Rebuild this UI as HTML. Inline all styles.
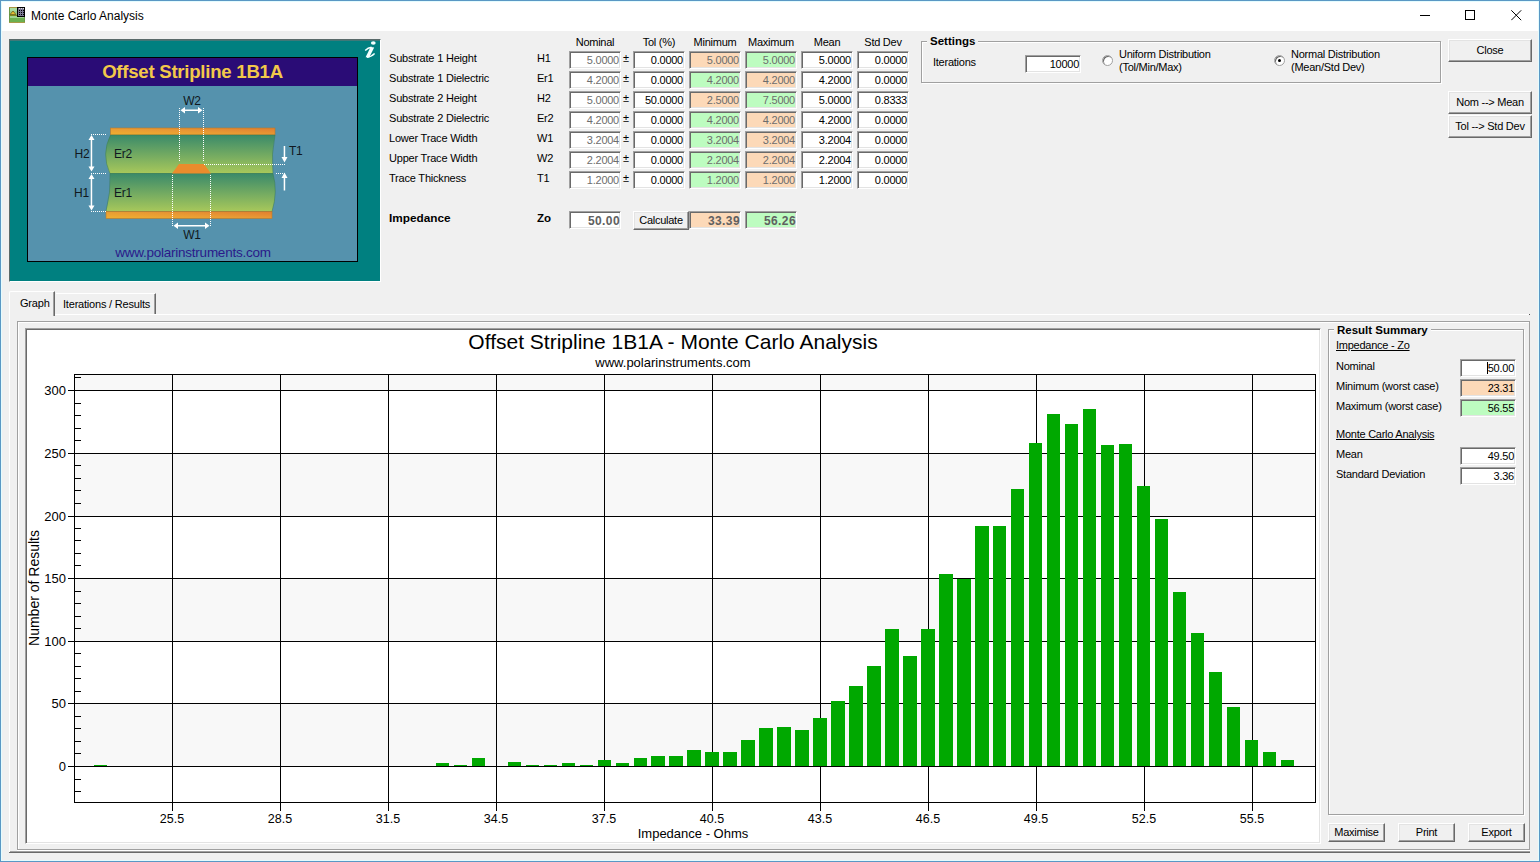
<!DOCTYPE html><html><head><meta charset="utf-8"><title>Monte Carlo Analysis</title><style>
*{margin:0;padding:0}
html,body{width:1540px;height:862px;overflow:hidden;background:#f0f0f0;font-family:"Liberation Sans",sans-serif;font-size:11px;color:#000;letter-spacing:-0.25px}
.nl{letter-spacing:0}
.ab{position:absolute;white-space:nowrap}
.sk{position:absolute;box-sizing:border-box;background:#fff;border-top:1px solid #a0a0a0;border-left:1px solid #a0a0a0;border-right:1px solid #fff;border-bottom:1px solid #fff;box-shadow:inset 1px 1px 0 #696969,inset -1px -1px 0 #e3e3e3;text-align:right;padding-right:1px;line-height:16px;font-size:11px;white-space:nowrap}
.bt{position:absolute;box-sizing:border-box;background:#f0f0f0;border-top:1px solid #fff;border-left:1px solid #fff;border-right:1px solid #696969;border-bottom:1px solid #696969;box-shadow:inset -1px -1px 0 #a0a0a0,inset 1px 1px 0 #e3e3e3;text-align:center;font-size:11px;white-space:nowrap}
.gb{position:absolute;box-sizing:border-box;border:1px solid #a0a0a0;box-shadow:inset 1px 1px 0 #fff,1px 1px 0 #fff}
.gy{color:#6d6d6d}
.pk{background:#fcd9b8}
.gn{background:#bdfcc0}
.b{font-weight:bold;letter-spacing:0}
</style></head><body>
<div class="ab" style="left:0;top:0;width:1540px;height:31px;background:#fff"></div>
<div class="ab" style="left:0;top:0;width:1538px;height:860px;border:1px solid #5a98c4;box-shadow:inset 1px 1px 0 #e4fcff,inset -1px -1px 0 #e4fcff"></div>
<svg class="ab" style="left:9px;top:7px" width="16" height="16" viewBox="0 0 16 16" shape-rendering="crispEdges">
<rect x="0" y="0" width="16" height="16" fill="#6a9a48"/>
<rect x="0" y="0" width="8" height="1" fill="#a89440"/>
<rect x="0" y="15" width="16" height="1" fill="#a89a48"/>
<rect x="1" y="1" width="7" height="3" fill="#a8dca0"/>
<rect x="1" y="4" width="7" height="4" fill="#98cc88"/>
<path d="M1 7.5 L4 4 L7 7.5 Z" fill="#e8c030" stroke="#706018" stroke-width="0.8" shape-rendering="auto"/>
<rect x="1" y="8" width="7" height="1" fill="#7a8a20"/>
<rect x="1" y="9" width="14" height="2" fill="#a0d490"/>
<rect x="1" y="11" width="14" height="4" fill="#6cb050"/>
<rect x="8" y="0" width="8" height="10" fill="#000"/>
<rect x="9" y="1" width="6" height="8" fill="#7c7a94"/>
<g fill="#000"><rect x="10" y="3" width="1" height="1"/><rect x="12" y="3" width="1" height="1"/><rect x="14" y="3" width="1" height="1"/>
<rect x="10" y="5" width="1" height="1"/><rect x="12" y="5" width="1" height="1"/><rect x="14" y="5" width="1" height="1"/>
<rect x="10" y="7" width="1" height="1"/><rect x="12" y="7" width="1" height="1"/><rect x="14" y="7" width="1" height="1"/></g>
<g fill="#ddd"><rect x="10" y="1" width="1" height="1"/><rect x="12" y="1" width="1" height="1"/><rect x="14" y="1" width="1" height="1"/></g>
</svg>
<div class="ab" style="left:31px;top:8px;font-size:12px;letter-spacing:0;line-height:16px">Monte Carlo Analysis</div>
<div class="ab" style="left:1420px;top:15px;width:10px;height:1px;background:#000"></div>
<div class="ab" style="left:1465px;top:10px;width:10px;height:10px;box-sizing:border-box;border:1px solid #000"></div>
<svg class="ab" style="left:1511px;top:10px" width="11" height="11" viewBox="0 0 11 11"><path d="M0.3 0.3L10.2 10.2M10.2 0.3L0.3 10.2" stroke="#000" stroke-width="1"/></svg>
<div class="ab" style="left:9px;top:39px;width:372px;height:243px;box-sizing:border-box;background:#008080;border-top:1px solid #5a6a6a;border-left:1px solid #5a6a6a;border-right:1px solid #fff;border-bottom:1px solid #fff;box-shadow:inset 0 1px 0 #3f7878"></div>
<svg class="ab" style="left:360px;top:38px" width="20" height="22" viewBox="360 38 20 22">
<ellipse cx="373.3" cy="43" rx="2.4" ry="1.8" fill="#f4ffff"/>
<path d="M370.6 47 L374.2 47.4 L369.2 57.6 L365.6 57.2 Z" fill="#f4ffff"/>
<path d="M365.2 50.6 Q368 47.6 371.5 47.3" stroke="#f4ffff" stroke-width="1.4" fill="none"/>
<path d="M367 57.3 Q371 57.2 374.6 53.6" stroke="#f4ffff" stroke-width="1.4" fill="none"/>
</svg>
<svg class="ab" style="left:27px;top:57px" width="331" height="205" viewBox="27 57 331 205">
<defs>
<linearGradient id="dg" x1="0" y1="0" x2="0" y2="1"><stop offset="0" stop-color="#3a8a6a"/><stop offset="1" stop-color="#a8c85a"/></linearGradient>
<linearGradient id="cu" x1="0" y1="0" x2="1" y2="0"><stop offset="0" stop-color="#f0a838"/><stop offset="0.5" stop-color="#eca035"/><stop offset="1" stop-color="#e08a30"/></linearGradient>
<linearGradient id="cu2" x1="0" y1="1" x2="1" y2="0"><stop offset="0" stop-color="#f0b030"/><stop offset="0.5" stop-color="#e89a34"/><stop offset="1" stop-color="#e07e30"/></linearGradient>
</defs>
<rect x="27.5" y="57.5" width="330" height="204" fill="#5592ad" stroke="#000" stroke-width="1"/>
<rect x="28" y="58" width="329" height="28" fill="#2a0c76"/>
<text x="192.5" y="78" text-anchor="middle" font-family="Liberation Sans" font-weight="bold" font-size="18.6" fill="#f2c84a">Offset Stripline 1B1A</text>
<rect x="110.5" y="128" width="164.5" height="7" fill="url(#cu2)" stroke="#b8782a" stroke-width="0.6"/>
<path d="M110.5 135 L275 135 Q271 154 273 173.5 L110 173.5 Q101 154 110.5 135 Z" fill="url(#dg)" stroke="#3a7a50" stroke-width="0.5"/>
<path d="M110 173.5 L273 173.5 Q278 192 272 211.5 L106 211.5 Q111 192 110 173.5 Z" fill="url(#dg)" stroke="#3a7a50" stroke-width="0.5"/>
<rect x="106" y="211.5" width="166" height="7" fill="url(#cu2)" stroke="#b8782a" stroke-width="0.6"/>
<path d="M172 173.5 L179 164 L204 164 L211 173.5 Z" fill="#ea8c2c"/>
<g stroke="#fff" stroke-width="1" stroke-dasharray="1 1" fill="none">
<path d="M179.5 108 V162 M203.5 108 V162"/>
<path d="M172.5 175 V226 M210.5 175 V226"/>
<path d="M91 134.5 H106 M91 173.5 H106 M91 211.5 H106"/>
<path d="M204 164.5 H285 M276 173.5 H285"/>
</g>
<g fill="#fff" stroke="none">
<rect x="183" y="109.5" width="17" height="1.5"/><path d="M180.5 110.2 L185 107 L185 113.5 Z M202.5 110.2 L198 107 L198 113.5 Z"/>
<rect x="176" y="225" width="31" height="1.5"/><path d="M173.5 225.7 L178 222.5 L178 229 Z M209.5 225.7 L205 222.5 L205 229 Z"/>
<rect x="90.7" y="137" width="1.5" height="32"/><path d="M91.5 135 L88.5 140 L94.5 140 Z M91.5 171.5 L88.5 166.5 L94.5 166.5 Z"/>
<rect x="90.7" y="176" width="1.5" height="32"/><path d="M91.5 174 L88.5 179 L94.5 179 Z M91.5 210.5 L88.5 205.5 L94.5 205.5 Z"/>
<rect x="283.7" y="146" width="1.5" height="12"/><path d="M284.5 162.5 L281.5 157 L287.5 157 Z"/>
<rect x="283.7" y="177" width="1.5" height="13.5"/><path d="M284.5 172.5 L281.5 178 L287.5 178 Z"/>
</g>
<g font-family="Liberation Sans" font-size="12" fill="#101820">
<text x="192" y="105" text-anchor="middle">W2</text>
<text x="192" y="239" text-anchor="middle">W1</text>
<text x="82" y="158" text-anchor="middle">H2</text>
<text x="81.5" y="196.5" text-anchor="middle">H1</text>
<text x="114" y="158">Er2</text>
<text x="114" y="196.5">Er1</text>
<text x="289" y="155">T1</text>
</g>
<text x="193" y="257" text-anchor="middle" font-family="Liberation Sans" font-size="13.5" fill="#2a1a8a">www.polarinstruments.com</text>
</svg>
<div class="ab" style="left:569px;top:35px;width:52px;text-align:center;line-height:14px">Nominal</div>
<div class="ab" style="left:633px;top:35px;width:52px;text-align:center;line-height:14px">Tol (%)</div>
<div class="ab" style="left:689px;top:35px;width:52px;text-align:center;line-height:14px">Minimum</div>
<div class="ab" style="left:745px;top:35px;width:52px;text-align:center;line-height:14px">Maximum</div>
<div class="ab" style="left:801px;top:35px;width:52px;text-align:center;line-height:14px">Mean</div>
<div class="ab" style="left:857px;top:35px;width:52px;text-align:center;line-height:14px">Std Dev</div>
<div class="ab" style="left:389px;top:51px;line-height:14px;letter-spacing:-0.2px">Substrate 1 Height</div>
<div class="ab" style="left:537px;top:51px;line-height:14px">H1</div>
<div class="sk gy" style="left:569px;top:51px;width:52px;height:18px">5.0000</div>
<div class="ab" style="left:623px;top:51px;line-height:14px;font-size:11px">&#177;</div>
<div class="sk" style="left:633px;top:51px;width:52px;height:18px">0.0000</div>
<div class="sk gy pk" style="left:689px;top:51px;width:52px;height:18px">5.0000</div>
<div class="sk gy gn" style="left:745px;top:51px;width:52px;height:18px">5.0000</div>
<div class="sk" style="left:801px;top:51px;width:52px;height:18px">5.0000</div>
<div class="sk" style="left:857px;top:51px;width:52px;height:18px">0.0000</div>
<div class="ab" style="left:389px;top:71px;line-height:14px;letter-spacing:-0.2px">Substrate 1 Dielectric</div>
<div class="ab" style="left:537px;top:71px;line-height:14px">Er1</div>
<div class="sk gy" style="left:569px;top:71px;width:52px;height:18px">4.2000</div>
<div class="ab" style="left:623px;top:71px;line-height:14px;font-size:11px">&#177;</div>
<div class="sk" style="left:633px;top:71px;width:52px;height:18px">0.0000</div>
<div class="sk gy gn" style="left:689px;top:71px;width:52px;height:18px">4.2000</div>
<div class="sk gy pk" style="left:745px;top:71px;width:52px;height:18px">4.2000</div>
<div class="sk" style="left:801px;top:71px;width:52px;height:18px">4.2000</div>
<div class="sk" style="left:857px;top:71px;width:52px;height:18px">0.0000</div>
<div class="ab" style="left:389px;top:91px;line-height:14px;letter-spacing:-0.2px">Substrate 2 Height</div>
<div class="ab" style="left:537px;top:91px;line-height:14px">H2</div>
<div class="sk gy" style="left:569px;top:91px;width:52px;height:18px">5.0000</div>
<div class="ab" style="left:623px;top:91px;line-height:14px;font-size:11px">&#177;</div>
<div class="sk" style="left:633px;top:91px;width:52px;height:18px">50.0000</div>
<div class="sk gy pk" style="left:689px;top:91px;width:52px;height:18px">2.5000</div>
<div class="sk gy gn" style="left:745px;top:91px;width:52px;height:18px">7.5000</div>
<div class="sk" style="left:801px;top:91px;width:52px;height:18px">5.0000</div>
<div class="sk" style="left:857px;top:91px;width:52px;height:18px">0.8333</div>
<div class="ab" style="left:389px;top:111px;line-height:14px;letter-spacing:-0.2px">Substrate 2 Dielectric</div>
<div class="ab" style="left:537px;top:111px;line-height:14px">Er2</div>
<div class="sk gy" style="left:569px;top:111px;width:52px;height:18px">4.2000</div>
<div class="ab" style="left:623px;top:111px;line-height:14px;font-size:11px">&#177;</div>
<div class="sk" style="left:633px;top:111px;width:52px;height:18px">0.0000</div>
<div class="sk gy gn" style="left:689px;top:111px;width:52px;height:18px">4.2000</div>
<div class="sk gy pk" style="left:745px;top:111px;width:52px;height:18px">4.2000</div>
<div class="sk" style="left:801px;top:111px;width:52px;height:18px">4.2000</div>
<div class="sk" style="left:857px;top:111px;width:52px;height:18px">0.0000</div>
<div class="ab" style="left:389px;top:131px;line-height:14px;letter-spacing:-0.2px">Lower Trace Width</div>
<div class="ab" style="left:537px;top:131px;line-height:14px">W1</div>
<div class="sk gy" style="left:569px;top:131px;width:52px;height:18px">3.2004</div>
<div class="ab" style="left:623px;top:131px;line-height:14px;font-size:11px">&#177;</div>
<div class="sk" style="left:633px;top:131px;width:52px;height:18px">0.0000</div>
<div class="sk gy gn" style="left:689px;top:131px;width:52px;height:18px">3.2004</div>
<div class="sk gy pk" style="left:745px;top:131px;width:52px;height:18px">3.2004</div>
<div class="sk" style="left:801px;top:131px;width:52px;height:18px">3.2004</div>
<div class="sk" style="left:857px;top:131px;width:52px;height:18px">0.0000</div>
<div class="ab" style="left:389px;top:151px;line-height:14px;letter-spacing:-0.2px">Upper Trace Width</div>
<div class="ab" style="left:537px;top:151px;line-height:14px">W2</div>
<div class="sk gy" style="left:569px;top:151px;width:52px;height:18px">2.2004</div>
<div class="ab" style="left:623px;top:151px;line-height:14px;font-size:11px">&#177;</div>
<div class="sk" style="left:633px;top:151px;width:52px;height:18px">0.0000</div>
<div class="sk gy gn" style="left:689px;top:151px;width:52px;height:18px">2.2004</div>
<div class="sk gy pk" style="left:745px;top:151px;width:52px;height:18px">2.2004</div>
<div class="sk" style="left:801px;top:151px;width:52px;height:18px">2.2004</div>
<div class="sk" style="left:857px;top:151px;width:52px;height:18px">0.0000</div>
<div class="ab" style="left:389px;top:171px;line-height:14px;letter-spacing:-0.2px">Trace Thickness</div>
<div class="ab" style="left:537px;top:171px;line-height:14px">T1</div>
<div class="sk gy" style="left:569px;top:171px;width:52px;height:18px">1.2000</div>
<div class="ab" style="left:623px;top:171px;line-height:14px;font-size:11px">&#177;</div>
<div class="sk" style="left:633px;top:171px;width:52px;height:18px">0.0000</div>
<div class="sk gy gn" style="left:689px;top:171px;width:52px;height:18px">1.2000</div>
<div class="sk gy pk" style="left:745px;top:171px;width:52px;height:18px">1.2000</div>
<div class="sk" style="left:801px;top:171px;width:52px;height:18px">1.2000</div>
<div class="sk" style="left:857px;top:171px;width:52px;height:18px">0.0000</div>
<div class="ab b" style="left:389px;top:211px;line-height:14px;font-size:11.8px">Impedance</div>
<div class="ab b" style="left:537px;top:211px;line-height:14px;font-size:11.5px">Zo</div>
<div class="sk gy b" style="left:569px;top:211px;width:52px;height:18px;font-size:12px;letter-spacing:0.4px;color:#606060;line-height:18px;padding-right:0">50.00</div>
<div class="bt" style="left:633px;top:211px;width:56px;height:19px;line-height:16px">Calculate</div>
<div class="sk gy b pk" style="left:689px;top:211px;width:52px;height:18px;font-size:12px;letter-spacing:0.4px;color:#606060;line-height:18px;padding-right:0">33.39</div>
<div class="sk gy b gn" style="left:745px;top:211px;width:52px;height:18px;font-size:12px;letter-spacing:0.4px;color:#606060;line-height:18px;padding-right:0">56.26</div>
<div class="gb" style="left:921px;top:41px;width:520px;height:42px"></div>
<div class="ab b" style="left:927px;top:34px;padding:0 3px;background:#f0f0f0;line-height:14px;font-size:11.5px">Settings</div>
<div class="ab" style="left:933px;top:55px;line-height:14px">Iterations</div>
<div class="sk" style="left:1025px;top:55px;width:56px;height:18px">10000</div>
<div class="ab" style="left:1102px;top:55px;width:11px;height:11px;border-radius:50%;box-sizing:border-box;border:1px solid #a0a0a0;background:#fff;box-shadow:inset 1px 1px 0 #696969"></div>
<div class="ab" style="left:1119px;top:48px;line-height:13px">Uniform Distribution<br>(Tol/Min/Max)</div>
<div class="ab" style="left:1274px;top:55px;width:11px;height:11px;border-radius:50%;box-sizing:border-box;border:1px solid #a0a0a0;background:#fff;box-shadow:inset 1px 1px 0 #696969"></div>
<div class="ab" style="left:1278px;top:59px;width:3px;height:3px;border-radius:50%;background:#000"></div>
<div class="ab" style="left:1291px;top:48px;line-height:13px">Normal Distribution<br>(Mean/Std Dev)</div>
<div class="bt" style="left:1448px;top:39px;width:84px;height:23px;line-height:20px">Close</div>
<div class="bt" style="left:1448px;top:91px;width:84px;height:23px;line-height:20px">Nom --&gt; Mean</div>
<div class="bt" style="left:1448px;top:115px;width:84px;height:23px;line-height:20px">Tol --&gt; Std Dev</div>
<div class="ab" style="left:9px;top:314px;width:1521px;height:1px;background:#fff"></div>
<div class="ab" style="left:9px;top:314px;width:1px;height:538px;background:#fff"></div>
<div class="ab" style="left:1529px;top:314px;width:1px;height:1px;background:#555"></div>
<div class="ab" style="left:9px;top:852px;width:1521px;height:1px;background:#696969"></div>
<div class="ab" style="left:10px;top:851px;width:1520px;height:1px;background:#a0a0a0"></div>
<div class="ab" style="left:56px;top:293px;width:100px;height:21px;box-sizing:border-box;border-top:1px solid #fff;border-right:1px solid #696969;box-shadow:inset -1px 0 0 #a0a0a0;background:#f0f0f0"></div>
<div class="ab" style="left:63px;top:297px;line-height:14px;letter-spacing:-0.2px">Iterations / Results</div>
<div class="ab" style="left:9px;top:291px;width:46px;height:25px;box-sizing:border-box;border-top:1px solid #fff;border-left:1px solid #fff;border-right:1px solid #696969;box-shadow:inset -1px 0 0 #a0a0a0;background:#f0f0f0;border-top-left-radius:2px"></div>
<div class="ab" style="left:20px;top:296px;line-height:14px;letter-spacing:-0.2px">Graph</div>
<div class="ab" style="left:17px;top:321px;width:1513px;height:529px;box-sizing:border-box;border:1px solid #a0a0a0;box-shadow:inset 1px 1px 0 #fff,0 1px 0 #fff"></div>
<div class="ab" style="left:25px;top:328px;width:1296px;height:516px;box-sizing:border-box;background:#fff;border-top:1px solid #a0a0a0;border-left:1px solid #a0a0a0;border-right:1px solid #fff;border-bottom:1px solid #fff;box-shadow:inset 1px 1px 0 #696969,inset -1px -1px 0 #e3e3e3"></div>
<svg class="ab" style="left:0;top:0" width="1540" height="862" viewBox="0 0 1540 862" shape-rendering="crispEdges">
<rect x="75" y="375" width="1240" height="15" fill="#f8f8f8"/>
<rect x="75" y="454" width="1240" height="62" fill="#f8f8f8"/>
<rect x="75" y="579" width="1240" height="62" fill="#f8f8f8"/>
<rect x="75" y="704" width="1240" height="62" fill="#f8f8f8"/>
<rect x="172" y="374" width="1" height="437" fill="#000"/>
<rect x="280" y="374" width="1" height="437" fill="#000"/>
<rect x="388" y="374" width="1" height="437" fill="#000"/>
<rect x="496" y="374" width="1" height="437" fill="#000"/>
<rect x="604" y="374" width="1" height="437" fill="#000"/>
<rect x="712" y="374" width="1" height="437" fill="#000"/>
<rect x="820" y="374" width="1" height="437" fill="#000"/>
<rect x="928" y="374" width="1" height="437" fill="#000"/>
<rect x="1036" y="374" width="1" height="437" fill="#000"/>
<rect x="1144" y="374" width="1" height="437" fill="#000"/>
<rect x="1252" y="374" width="1" height="437" fill="#000"/>
<rect x="68" y="390" width="1248" height="1" fill="#000"/>
<rect x="68" y="453" width="1248" height="1" fill="#000"/>
<rect x="68" y="516" width="1248" height="1" fill="#000"/>
<rect x="68" y="578" width="1248" height="1" fill="#000"/>
<rect x="68" y="641" width="1248" height="1" fill="#000"/>
<rect x="68" y="703" width="1248" height="1" fill="#000"/>
<rect x="68" y="766" width="1248" height="1" fill="#000"/>
<rect x="74" y="374" width="1242" height="1" fill="#000"/>
<rect x="74" y="802" width="1242" height="1" fill="#000"/>
<rect x="74" y="374" width="1" height="429" fill="#000"/>
<rect x="1315" y="374" width="1" height="429" fill="#000"/>
<rect x="75" y="791" width="6" height="1" fill="#000"/>
<rect x="75" y="779" width="6" height="1" fill="#000"/>
<rect x="75" y="753" width="6" height="1" fill="#000"/>
<rect x="75" y="741" width="6" height="1" fill="#000"/>
<rect x="75" y="728" width="6" height="1" fill="#000"/>
<rect x="75" y="716" width="6" height="1" fill="#000"/>
<rect x="75" y="691" width="6" height="1" fill="#000"/>
<rect x="75" y="678" width="6" height="1" fill="#000"/>
<rect x="75" y="666" width="6" height="1" fill="#000"/>
<rect x="75" y="653" width="6" height="1" fill="#000"/>
<rect x="75" y="628" width="6" height="1" fill="#000"/>
<rect x="75" y="616" width="6" height="1" fill="#000"/>
<rect x="75" y="603" width="6" height="1" fill="#000"/>
<rect x="75" y="591" width="6" height="1" fill="#000"/>
<rect x="75" y="565" width="6" height="1" fill="#000"/>
<rect x="75" y="553" width="6" height="1" fill="#000"/>
<rect x="75" y="540" width="6" height="1" fill="#000"/>
<rect x="75" y="528" width="6" height="1" fill="#000"/>
<rect x="75" y="503" width="6" height="1" fill="#000"/>
<rect x="75" y="490" width="6" height="1" fill="#000"/>
<rect x="75" y="478" width="6" height="1" fill="#000"/>
<rect x="75" y="465" width="6" height="1" fill="#000"/>
<rect x="75" y="440" width="6" height="1" fill="#000"/>
<rect x="75" y="428" width="6" height="1" fill="#000"/>
<rect x="75" y="415" width="6" height="1" fill="#000"/>
<rect x="75" y="403" width="6" height="1" fill="#000"/>
<rect x="75" y="377" width="6" height="1" fill="#000"/>
<rect x="94" y="765" width="13" height="1" fill="#00a800"/>
<rect x="436" y="763" width="13" height="3" fill="#00a800"/>
<rect x="454" y="765" width="13" height="1" fill="#00a800"/>
<rect x="472" y="758" width="13" height="8" fill="#00a800"/>
<rect x="508" y="762" width="13" height="4" fill="#00a800"/>
<rect x="526" y="765" width="13" height="1" fill="#00a800"/>
<rect x="544" y="765" width="13" height="1" fill="#00a800"/>
<rect x="562" y="763" width="13" height="3" fill="#00a800"/>
<rect x="580" y="765" width="13" height="1" fill="#00a800"/>
<rect x="598" y="760" width="13" height="6" fill="#00a800"/>
<rect x="616" y="763" width="13" height="3" fill="#00a800"/>
<rect x="634" y="758" width="13" height="8" fill="#00a800"/>
<rect x="651" y="756" width="14" height="10" fill="#00a800"/>
<rect x="669" y="756" width="14" height="10" fill="#00a800"/>
<rect x="687" y="750" width="14" height="16" fill="#00a800"/>
<rect x="705" y="752" width="14" height="14" fill="#00a800"/>
<rect x="723" y="752" width="14" height="14" fill="#00a800"/>
<rect x="741" y="740" width="14" height="26" fill="#00a800"/>
<rect x="759" y="728" width="14" height="38" fill="#00a800"/>
<rect x="777" y="727" width="14" height="39" fill="#00a800"/>
<rect x="795" y="730" width="14" height="36" fill="#00a800"/>
<rect x="813" y="718" width="14" height="48" fill="#00a800"/>
<rect x="831" y="701" width="14" height="65" fill="#00a800"/>
<rect x="849" y="686" width="14" height="80" fill="#00a800"/>
<rect x="867" y="666" width="14" height="100" fill="#00a800"/>
<rect x="885" y="629" width="14" height="137" fill="#00a800"/>
<rect x="903" y="656" width="14" height="110" fill="#00a800"/>
<rect x="921" y="629" width="14" height="137" fill="#00a800"/>
<rect x="939" y="574" width="14" height="192" fill="#00a800"/>
<rect x="957" y="579" width="14" height="187" fill="#00a800"/>
<rect x="975" y="526" width="14" height="240" fill="#00a800"/>
<rect x="993" y="526" width="13" height="240" fill="#00a800"/>
<rect x="1011" y="489" width="13" height="277" fill="#00a800"/>
<rect x="1029" y="443" width="13" height="323" fill="#00a800"/>
<rect x="1047" y="414" width="13" height="352" fill="#00a800"/>
<rect x="1065" y="424" width="13" height="342" fill="#00a800"/>
<rect x="1083" y="409" width="13" height="357" fill="#00a800"/>
<rect x="1101" y="445" width="13" height="321" fill="#00a800"/>
<rect x="1119" y="444" width="13" height="322" fill="#00a800"/>
<rect x="1137" y="486" width="13" height="280" fill="#00a800"/>
<rect x="1155" y="519" width="13" height="247" fill="#00a800"/>
<rect x="1173" y="592" width="13" height="174" fill="#00a800"/>
<rect x="1191" y="633" width="13" height="133" fill="#00a800"/>
<rect x="1209" y="672" width="13" height="94" fill="#00a800"/>
<rect x="1227" y="707" width="13" height="59" fill="#00a800"/>
<rect x="1245" y="740" width="13" height="26" fill="#00a800"/>
<rect x="1263" y="752" width="13" height="14" fill="#00a800"/>
<rect x="1281" y="760" width="13" height="6" fill="#00a800"/>
</svg>
<div class="ab nl" style="left:30px;top:383px;width:36px;text-align:right;font-size:13px;line-height:16px">300</div>
<div class="ab nl" style="left:30px;top:446px;width:36px;text-align:right;font-size:13px;line-height:16px">250</div>
<div class="ab nl" style="left:30px;top:509px;width:36px;text-align:right;font-size:13px;line-height:16px">200</div>
<div class="ab nl" style="left:30px;top:571px;width:36px;text-align:right;font-size:13px;line-height:16px">150</div>
<div class="ab nl" style="left:30px;top:634px;width:36px;text-align:right;font-size:13px;line-height:16px">100</div>
<div class="ab nl" style="left:30px;top:696px;width:36px;text-align:right;font-size:13px;line-height:16px">50</div>
<div class="ab nl" style="left:30px;top:759px;width:36px;text-align:right;font-size:13px;line-height:16px">0</div>
<div class="ab nl" style="left:141px;top:811px;width:62px;text-align:center;font-size:12.5px;line-height:16px">25.5</div>
<div class="ab nl" style="left:249px;top:811px;width:62px;text-align:center;font-size:12.5px;line-height:16px">28.5</div>
<div class="ab nl" style="left:357px;top:811px;width:62px;text-align:center;font-size:12.5px;line-height:16px">31.5</div>
<div class="ab nl" style="left:465px;top:811px;width:62px;text-align:center;font-size:12.5px;line-height:16px">34.5</div>
<div class="ab nl" style="left:573px;top:811px;width:62px;text-align:center;font-size:12.5px;line-height:16px">37.5</div>
<div class="ab nl" style="left:681px;top:811px;width:62px;text-align:center;font-size:12.5px;line-height:16px">40.5</div>
<div class="ab nl" style="left:789px;top:811px;width:62px;text-align:center;font-size:12.5px;line-height:16px">43.5</div>
<div class="ab nl" style="left:897px;top:811px;width:62px;text-align:center;font-size:12.5px;line-height:16px">46.5</div>
<div class="ab nl" style="left:1005px;top:811px;width:62px;text-align:center;font-size:12.5px;line-height:16px">49.5</div>
<div class="ab nl" style="left:1113px;top:811px;width:62px;text-align:center;font-size:12.5px;line-height:16px">52.5</div>
<div class="ab nl" style="left:1221px;top:811px;width:62px;text-align:center;font-size:12.5px;line-height:16px">55.5</div>
<div class="ab nl" style="left:273px;top:330px;width:800px;text-align:center;font-size:21px;line-height:24px">Offset Stripline 1B1A - Monte Carlo Analysis</div>
<div class="ab nl" style="left:273px;top:355px;width:800px;text-align:center;font-size:13px;line-height:16px">www.polarinstruments.com</div>
<div class="ab nl" style="left:593px;top:826px;width:200px;text-align:center;font-size:13px;line-height:16px">Impedance - Ohms</div>
<div class="ab nl" style="left:-26px;top:580px;width:120px;text-align:center;font-size:14px;line-height:16px;transform:rotate(-90deg)">Number of Results</div>
<div class="gb" style="left:1328px;top:329px;width:196px;height:486px"></div>
<div class="ab b" style="left:1334px;top:323px;padding:0 3px;background:#f0f0f0;line-height:14px;font-size:11.5px">Result Summary</div>
<div class="ab" style="left:1336px;top:338px;line-height:14px;text-decoration:underline">Impedance - Zo</div>
<div class="ab" style="left:1336px;top:359px;line-height:14px">Nominal</div>
<div class="sk" style="left:1460px;top:359px;width:56px;height:18px">50.00</div>
<div class="ab" style="left:1487px;top:362px;width:1px;height:12px;background:#000"></div>
<div class="ab" style="left:1336px;top:379px;line-height:14px">Minimum (worst case)</div>
<div class="sk pk" style="left:1460px;top:379px;width:56px;height:18px">23.31</div>
<div class="ab" style="left:1336px;top:399px;line-height:14px">Maximum (worst case)</div>
<div class="sk gn" style="left:1460px;top:399px;width:56px;height:18px">56.55</div>
<div class="ab" style="left:1336px;top:427px;line-height:14px;text-decoration:underline">Monte Carlo Analysis</div>
<div class="ab" style="left:1336px;top:447px;line-height:14px">Mean</div>
<div class="sk" style="left:1460px;top:447px;width:56px;height:18px">49.50</div>
<div class="ab" style="left:1336px;top:467px;line-height:14px">Standard Deviation</div>
<div class="sk" style="left:1460px;top:467px;width:56px;height:18px">3.36</div>
<div class="bt" style="left:1328px;top:823px;width:57px;height:19px;line-height:16px">Maximise</div>
<div class="bt" style="left:1398px;top:823px;width:57px;height:19px;line-height:16px">Print</div>
<div class="bt" style="left:1468px;top:823px;width:57px;height:19px;line-height:16px">Export</div>
</body></html>
